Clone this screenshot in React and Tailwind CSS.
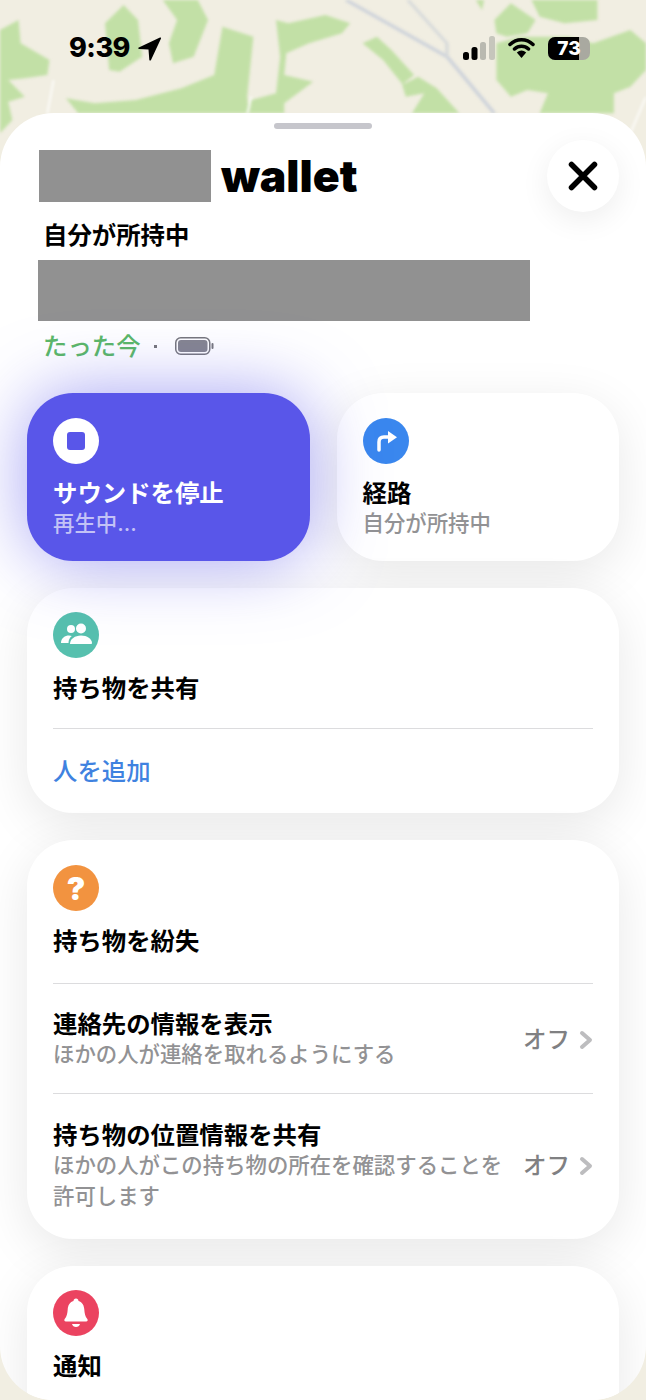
import React from "react";

const jp = "font-['Inter','Noto_Sans_CJK_JP',sans-serif]";

function MapBackground() {
  const greens = [
    "0,90 45,60 50,130 120,180 115,225 60,235 20,240 60,290 20,305 30,360 0,400",
    "255,70 300,15 335,60 345,170 290,215 265,210",
    "395,0 480,0 505,60 470,170 420,190 410,130 430,60",
    "160,295 230,310 330,300 440,265 520,225 540,80 615,110 600,290 605,340 190,340",
    "610,300 670,280 680,170 670,60 700,70 790,45 850,70 830,100 750,130 695,160 690,225 760,245 690,310 690,340 605,340",
    "880,130 915,110 950,150 1005,225 975,255 1015,230 1060,265 1115,340 1000,340 1030,280 985,290 975,250 930,180",
    "1155,0 1175,0 1170,30",
    "1290,0 1450,0 1450,60 1370,70 1310,50",
    "1200,60 1240,10 1300,60 1280,100 1230,110 1205,100",
    "1205,130 1260,110 1380,110 1440,130 1530,90 1568,130 1568,210 1530,260 1490,280 1490,340 1310,340 1330,280 1280,270 1240,290 1205,240",
  ];
  return (
    <svg
      className="absolute top-0 left-0 w-[646px] h-[140px] blur-[1.5px]"
      viewBox="0 0 1568 420"
      preserveAspectRatio="none"
    >
      {greens.map((g) => (
        <polygon key={g} points={g} fill="#c2e0a6" />
      ))}
      <path d="M840 0L1085 170L1200 340" fill="none" stroke="#cdd2da" strokeWidth="9" />
      <path d="M990 0L1085 130V170" fill="none" stroke="#d6d9da" strokeWidth="8" />
      <path d="M130 240L115 340M610 290L600 340M1568 290L1530 400" fill="none" stroke="#ffffff" strokeWidth="4" />
    </svg>
  );
}

function StatusBar() {
  return (
    <div className="relative h-[113px] pt-[33px] pl-[69px] pr-[56px] flex items-start justify-between text-black">
      <div className="flex items-center gap-[8px] h-[30px]">
        <span className="font-['Inter',sans-serif] font-extrabold text-[27px] leading-[30px] tracking-[-0.5px]">9:39</span>
        <svg width="23" height="25" viewBox="0 0 23 25">
          <path d="M22.500 1.300L.800 11.500c-.9.4-.6 1.500.3 1.500l9.400.4.8 10.300c.1 1 1.300 1.200 1.700.3l10-21.500c.4-.9-.1-1-.5-.7z" fill="#000" />
        </svg>
      </div>
      <div className="flex items-center gap-[13px] h-[30px]">
        <svg width="32" height="24" viewBox="0 0 32 24">
          <rect x="0" y="16" width="6" height="8" rx="2.5" fill="#000" />
          <rect x="8.500" y="11" width="6" height="13" rx="2.5" fill="#000" />
          <rect x="17" y="6" width="6" height="18" rx="2.5" fill="#b9b9b0" />
          <rect x="26" y="0" width="6" height="24" rx="2.5" fill="#c6c6bc" />
        </svg>
        <svg width="27" height="22" viewBox="0 0 27 22">
          <path d="M2 7.500C8.500 1 18.500 1 25 7.500M6.500 12C10.500 8.200 16.500 8.200 20.500 12" fill="none" stroke="#000" strokeWidth="3.500" strokeLinecap="round" />
          <path d="M8.800 15.500Q13.500 11.500 18.200 15.500L13.500 21z" fill="#000" />
        </svg>
        <div className="relative w-[42px] h-[23px] rounded-[7px] bg-[#a9a9a0] overflow-hidden">
          <div className="h-full w-[31px] bg-black" />
          <span className="absolute inset-0 flex items-center justify-center font-['Inter',sans-serif] font-extrabold text-[19px] leading-none text-white">73</span>
        </div>
      </div>
    </div>
  );
}

function IconCircle({ color, children }) {
  return (
    <div className={`w-[46px] h-[46px] rounded-full flex items-center justify-center ${color}`}>
      {children}
    </div>
  );
}

function Card({ children }) {
  return (
    <div className="bg-white rounded-[46px] px-[26px] shadow-[0_12px_50px_rgba(0,0,0,0.095)]">
      {children}
    </div>
  );
}

function Divider() {
  return <div className="h-px bg-[#dcdcde]" />;
}

function OffRow({ title, sub }) {
  return (
    <div className="flex items-center gap-[16px]">
      <div className="flex-1 min-w-0">
        <div className="text-[24.4px] leading-[30px] font-semibold text-black">{title}</div>
        <div className="text-[21.4px] leading-[31px] font-medium text-[#929294]">{sub}</div>
      </div>
      <div className="w-[70px] flex items-center justify-between">
        <span className="text-[23.500px] leading-[30px] font-medium text-[#808082]">オフ</span>
        <svg width="14" height="20" viewBox="0 0 14 20">
          <path d="M3 3l8 7-8 7" fill="none" stroke="#bdbdbf" strokeWidth="4" strokeLinecap="round" strokeLinejoin="round" />
        </svg>
      </div>
    </div>
  );
}

export default function App() {
  return (
    <div className={`relative w-[646px] h-[1400px] overflow-hidden bg-[#f1eee2] ${jp}`}>
      <MapBackground />
      <StatusBar />

      <div className="relative h-[1287px] bg-white rounded-[54px] overflow-hidden">
        <div className="pt-[10px]">
          <div className="mx-auto w-[98px] h-[6px] rounded-full bg-[#c6c6cc]" />
        </div>

        <div className="mt-[11px] pl-[39px] pr-[27px] h-[72px] flex items-center justify-between">
          <div className="flex items-center gap-[10px]">
            <div className="w-[172px] h-[52px] bg-[#919191]" />
            <span className="font-['Inter',sans-serif] font-black text-[44.5px] leading-none text-black">wallet</span>
          </div>
          <button className="w-[72px] h-[72px] rounded-full bg-white shadow-[0_8px_30px_rgba(0,0,0,0.07)] flex items-center justify-center">
            <svg width="32" height="32" viewBox="0 0 32 32">
              <path d="M4.500 4.500l23 23M27.500 4.500l-23 23" fill="none" stroke="#000" strokeWidth="5.500" strokeLinecap="round" />
            </svg>
          </button>
        </div>

        <div className="mt-[8px] pl-[43px] text-[24.4px] leading-[30px] font-semibold text-black">自分が所持中</div>
        <div className="mt-[10px] ml-[38px] w-[492px] h-[61px] bg-[#919191]" />
        <div className="mt-[10px] pl-[43px] h-[30px] flex items-center">
          <span className="text-[24.4px] leading-[30px] font-medium text-[#5bb866]">たった今</span>
          <span className="ml-[13px] w-[3px] h-[3px] bg-[#77777a]" />
          <svg className="ml-[18px]" width="39" height="18" viewBox="0 0 39 18">
            <rect x="0.750" y="0.750" width="34" height="16.500" rx="5" fill="none" stroke="#77777c" strokeWidth="1.500" />
            <rect x="3" y="3" width="29.500" height="12" rx="3" fill="#85858f" />
            <rect x="36.500" y="6" width="2" height="6" rx="1" fill="#77777c" />
          </svg>
        </div>

        <div className="mt-[32px] px-[27px] flex flex-col gap-[27px]">
          <div className="grid grid-cols-2 gap-[27px]">
            <div className="relative z-10 h-[168px] rounded-[46px] bg-[#5956e9] px-[26px] pt-[25px] shadow-[0_0_70px_rgba(89,86,233,0.55)]">
              <IconCircle color="bg-white">
                <div className="w-[18px] h-[18px] rounded-[3px] bg-[#5956e9]" />
              </IconCircle>
              <div className="mt-[14px] text-[24.4px] leading-[30px] font-bold text-white">サウンドを停止</div>
              <div className="mt-[1px] text-[21.4px] leading-[28px] font-medium text-[#c3c2f6]">再生中...</div>
            </div>
            <div className="h-[168px] rounded-[46px] bg-white px-[26px] pt-[25px] shadow-[0_12px_50px_rgba(0,0,0,0.095)]">
              <IconCircle color="bg-[#3a87ee]">
                <svg width="26" height="26" viewBox="0 0 26 26">
                  <path d="M6 22v-8c0-3 1.500-5 5-5h5" fill="none" stroke="#fff" strokeWidth="3.500" strokeLinecap="round" />
                  <path d="M15 3l9 6.200-9 6.200z" fill="#fff" />
                </svg>
              </IconCircle>
              <div className="mt-[14px] text-[24.4px] leading-[30px] font-bold text-black">経路</div>
              <div className="mt-[1px] text-[21.4px] leading-[28px] font-medium text-[#929294]">自分が所持中</div>
            </div>
          </div>

          <Card>
            <div className="pt-[24px]">
              <IconCircle color="bg-[#56c0ae]">
                <svg width="32" height="26" viewBox="0 0 32 26">
                  <circle cx="11" cy="7" r="4" fill="#fff" />
                  <circle cx="21" cy="6.500" r="5" fill="#fff" />
                  <path d="M1 21c0-5 4-7.500 8-7.500 1 0 2 .2 2.800.5-2 1.600-3.300 4-3.300 7z" fill="#fff" />
                  <path d="M10 22c0-5 5-8.500 11-8.500s11 3.500 11 7.500c0 .7-.5 1-1.200 1z" fill="#fff" />
                </svg>
              </IconCircle>
              <div className="mt-[15px] text-[24.4px] leading-[30px] font-bold text-black">持ち物を共有</div>
            </div>
            <div className="mt-[25px]"><Divider /></div>
            <div className="h-[84px] flex items-center text-[24.4px] leading-[30px] font-medium text-[#3f82e0]">人を追加</div>
          </Card>

          <Card>
            <div className="pt-[25px]">
              <IconCircle color="bg-[#f29340]">
                <span className="font-['Inter',sans-serif] font-black text-[31px] leading-none text-white">?</span>
              </IconCircle>
              <div className="mt-[15px] text-[24.4px] leading-[30px] font-bold text-black">持ち物を紛失</div>
            </div>
            <div className="mt-[27px]"><Divider /></div>
            <div className="h-[109px] pt-[2px] flex items-center">
              <div className="w-full">
                <OffRow title="連絡先の情報を表示" sub="ほかの人が連絡を取れるようにする" />
              </div>
            </div>
            <Divider />
            <div className="pt-[26px] pb-[27px]">
              <OffRow title="持ち物の位置情報を共有" sub="ほかの人がこの持ち物の所在を確認することを許可します" />
            </div>
          </Card>

          <Card>
            <div className="pt-[24px] pb-[60px]">
              <IconCircle color="bg-[#eb4360]">
                <svg width="28" height="32" viewBox="0 0 28 32">
                  <path d="M14 1.500c1.500 0 2.500 1 2.500 2.500 4 1.200 5.500 4.500 5.800 8.500.3 4 .8 7 3 9.500.8 1 .3 2.500-1.200 2.500H3.900c-1.500 0-2-1.500-1.200-2.500 2.200-2.500 2.700-5.500 3-9.500.3-4 1.800-7.300 5.800-8.500 0-1.500 1-2.500 2.500-2.500z" fill="#fff" />
                  <path d="M10 27h8c-.5 2-2 3-4 3s-3.500-1-4-3z" fill="#fff" />
                </svg>
              </IconCircle>
              <div className="mt-[15px] text-[24.4px] leading-[30px] font-bold text-black">通知</div>
            </div>
          </Card>
        </div>
      </div>
    </div>
  );
}
